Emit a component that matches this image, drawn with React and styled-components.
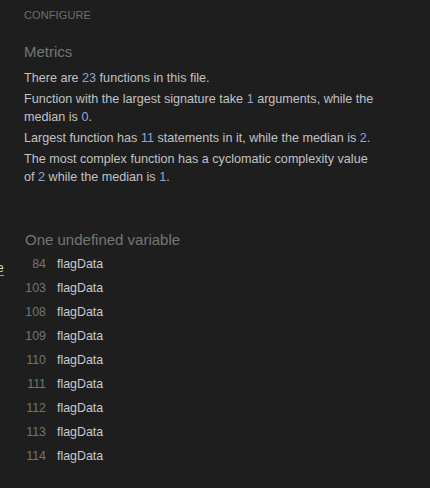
import React from "react";
import styled, { createGlobalStyle } from "styled-components";

const GlobalStyle = createGlobalStyle`
  html, body {
    margin: 0;
    padding: 0;
    background: #1e1e1e;
  }
  body {
    font-family: "Liberation Sans", Arial, sans-serif;
  }
`;

const Panel = styled.div`
  position: relative;
  width: 430px;
  height: 488px;
  box-sizing: border-box;
  padding: 9px 0 0 24px;
  background: #1e1e1e;
  overflow: hidden;
`;

const Configure = styled.div`
  font-size: 11px;
  line-height: 13px;
  color: #6e6e6e;
  letter-spacing: 0.1px;
`;

const SectionTitle = styled.h3`
  margin: ${(p) => p.$top}px 0 0 ${(p) => p.$indent || 0}px;
  font-size: 15px;
  line-height: 18px;
  font-weight: normal;
  color: #767676;
`;

const Metrics = styled.div`
  width: 354px;
  margin-top: 8px;
`;

const Line = styled.p`
  margin: 0 0 3px;
  font-size: 12.6px;
  line-height: 18px;
  color: #c2c2c2;
`;

const Num = styled.span`
  color: #8ea6d8;
`;

const Vars = styled.ul`
  list-style: none;
  margin: 6px 0 0;
  padding: 0;
  display: flex;
  flex-direction: column;
  gap: 6px;
`;

const VarRow = styled.li`
  display: flex;
  align-items: center;
  height: 18px;
  font-size: 12.4px;
`;

const LineNo = styled.span`
  width: 22px;
  text-align: right;
  color: #747474;
`;

const VarName = styled.span`
  margin-left: 11px;
  color: #cacaca;
`;

const Clipped = styled.span`
  position: absolute;
  left: -3px;
  top: 262px;
  font-size: 12px;
  line-height: 13px;
  color: #d8d8d8;
  border-bottom: 1px solid #d89a5a;
`;

const lines = [84, 103, 108, 109, 110, 111, 112, 113, 114];

export default function App() {
  return (
    <>
      <GlobalStyle />
      <Panel>
        <Configure>CONFIGURE</Configure>
        <SectionTitle $top={21}>Metrics</SectionTitle>
        <Metrics>
          <Line>
            There are <Num>23</Num> functions in this file.
          </Line>
          <Line>
            Function with the largest signature take <Num>1</Num> arguments,
            while the median is <Num>0</Num>.
          </Line>
          <Line>
            Largest function has <Num>11</Num> statements in it, while the
            median is <Num>2</Num>.
          </Line>
          <Line>
            The most complex function has a cyclomatic complexity value of{" "}
            <Num>2</Num> while the median is <Num>1</Num>.
          </Line>
        </Metrics>
        <SectionTitle $top={45} $indent={1}>
          One undefined variable
        </SectionTitle>
        <Vars>
          {lines.map((n) => (
            <VarRow key={n}>
              <LineNo>{n}</LineNo>
              <VarName>flagData</VarName>
            </VarRow>
          ))}
        </Vars>
        <Clipped>e</Clipped>
      </Panel>
    </>
  );
}
